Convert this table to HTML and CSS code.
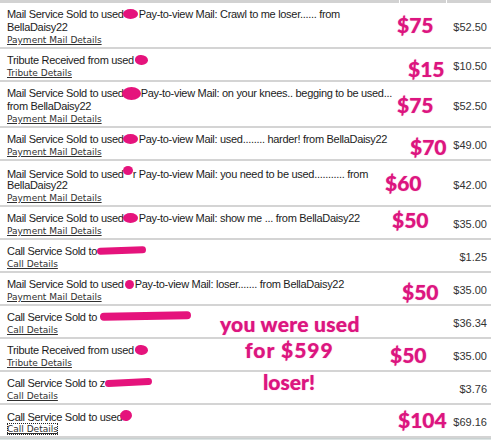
FILE: index.html
```html
<!DOCTYPE html>
<html>
<head>
<meta charset="utf-8">
<link rel="stylesheet" href="styles.css">
</head>
<body>
<div class="page">
  <div class="head"><div class="hc hc-desc"></div><div class="hc hc-mid"></div><div class="hc hc-amt"></div></div>

  <div class="row">
    <div class="desc">
      <div class="line">Mail Service Sold to used<span class="blob b1"></span>Pay-to-view Mail: Crawl to me loser...... from</div>
      <div class="line">BellaDaisy22</div>
      <a class="det">Payment Mail Details</a>
    </div>
    <div class="amt">$52.50</div>
  </div>

  <div class="row">
    <div class="desc">
      <div class="line">Tribute Received from used<span class="blob b2"></span></div>
      <a class="det">Tribute Details</a>
    </div>
    <div class="amt">$10.50</div>
  </div>

  <div class="row">
    <div class="desc">
      <div class="line">Mail Service Sold to used<span class="blob b3"></span>Pay-to-view Mail: on your knees.. begging to be used...</div>
      <div class="line">from BellaDaisy22</div>
      <a class="det">Payment Mail Details</a>
    </div>
    <div class="amt">$52.50</div>
  </div>

  <div class="row">
    <div class="desc">
      <div class="line">Mail Service Sold to used<span class="blob b1"></span>Pay-to-view Mail: used........ harder! from BellaDaisy22</div>
      <a class="det">Payment Mail Details</a>
    </div>
    <div class="amt">$49.00</div>
  </div>

  <div class="row">
    <div class="desc">
      <div class="line">Mail Service Sold to used<span class="blob b4"></span>r Pay-to-view Mail: you need to be used........... from</div>
      <div class="line">BellaDaisy22</div>
      <a class="det">Payment Mail Details</a>
    </div>
    <div class="amt">$42.00</div>
  </div>

  <div class="row">
    <div class="desc">
      <div class="line">Mail Service Sold to used<span class="blob b1"></span>Pay-to-view Mail: show me ... from BellaDaisy22</div>
      <a class="det">Payment Mail Details</a>
    </div>
    <div class="amt">$35.00</div>
  </div>

  <div class="row">
    <div class="desc">
      <div class="line">Call Service Sold to<span class="scr s1"></span></div>
      <a class="det">Call Details</a>
    </div>
    <div class="amt">$1.25</div>
  </div>

  <div class="row">
    <div class="desc">
      <div class="line">Mail Service Sold to used<span class="blob b5"></span>Pay-to-view Mail: loser....... from BellaDaisy22</div>
      <a class="det">Payment Mail Details</a>
    </div>
    <div class="amt">$35.00</div>
  </div>

  <div class="row">
    <div class="desc">
      <div class="line">Call Service Sold to <span class="scr s2"></span></div>
      <a class="det">Call Details</a>
    </div>
    <div class="amt">$36.34</div>
  </div>

  <div class="row">
    <div class="desc">
      <div class="line">Tribute Received from used<span class="blob b2"></span></div>
      <a class="det">Tribute Details</a>
    </div>
    <div class="amt">$35.00</div>
  </div>

  <div class="row">
    <div class="desc">
      <div class="line">Call Service Sold to z<span class="scr s3"></span></div>
      <a class="det">Call Details</a>
    </div>
    <div class="amt">$3.76</div>
  </div>

  <div class="row">
    <div class="desc">
      <div class="line">Call Service Sold to used<span class="blob b6"></span></div>
      <a class="det focus">Call Details</a>
    </div>
    <div class="amt">$69.16</div>
  </div>

  <div class="foot"></div>

  <div class="ink n1">$75</div>
  <div class="ink n2">$15</div>
  <div class="ink n3">$75</div>
  <div class="ink n4">$70</div>
  <div class="ink n5">$60</div>
  <div class="ink n6">$50</div>
  <div class="ink n7">$50</div>
  <div class="ink n8">you were used</div>
  <div class="ink n9">for $599</div>
  <div class="ink n10">$50</div>
  <div class="ink n11">loser!</div>
  <div class="ink n12">$104</div>
</div>
</body>
</html>
```

FILE: styles.css
```css
html, body {
  margin: 0;
  padding: 0;
  background: #ffffff;
}
body {
  font-family: "Liberation Sans", Arial, sans-serif;
  color: #1c1c1c;
}
.page {
  position: relative;
  width: 491px;
  height: 440px;
  overflow: hidden;
}
.head {
  display: flex;
  height: 3px;
  background: #d2d2d2;
}
.hc { height: 3px; }
.hc-desc { width: 399px; }
.hc-mid { width: 46px; border-left: 1px solid #fff; }
.hc-amt { flex: 1; border-left: 1px solid #fff; }

.row {
  display: flex;
  align-items: center;
  padding: 5px 0 1px 0;
  border-bottom: 2px solid #d4d4d4;
}
.desc {
  flex: 1;
  padding-left: 7px;
  min-width: 0;
  font-size: 11px;
}
.line {
  font-size: 11px;
  letter-spacing: -0.3px;
  line-height: 13px;
  height: 13px;
  white-space: nowrap;
}
.det {
  display: block;
  width: fit-content;
  height: 12px;
  font-family: "DejaVu Sans", Verdana, sans-serif;
  font-size: 9px;
  line-height: 12px;
  color: #303030;
  text-decoration: underline;
}
.focus {
  outline: 1px dotted #222;
  outline-offset: -1px;
}
.amt {
  width: 60px;
  padding-right: 4px;
  text-align: right;
  font-size: 11px;
  line-height: 13px;
  color: #333;
}

.blob {
  display: inline-block;
  background: #e5137c;
  border-radius: 50%;
  vertical-align: -1px;
}
.b1 { width: 15px; height: 10px; margin: 0 1px 0 -1px; }
.b2 { width: 13px; height: 10px; margin-left: 1px; border-radius: 45% 55% 50% 50%; }
.b3 { width: 19px; height: 13px; margin: 0 0 0 -2px; vertical-align: -3px; }
.b4 { width: 10px; height: 9px; margin-left: -1px; vertical-align: 3px; }
.b5 { width: 9px; height: 9px; margin: 0 1px; }
.b6 { width: 12px; height: 11px; margin-left: -2px; vertical-align: 0; transform: rotate(-20deg); }

.scr {
  display: inline-block;
  background: #e5137c;
  border-radius: 5px;
  height: 7px;
  vertical-align: 1px;
}
.s1 { width: 49px; transform: rotate(-2deg); }
.s2 { width: 91px; height: 8px; transform: rotate(-1deg); }
.s3 { width: 47px; transform: rotate(-3deg); }

.foot {
  height: 6px;
  background: #dde4e4;
  border-top: 1px solid #c9d1d1;
}

.ink {
  position: absolute;
  font-family: Lato, "Open Sans", sans-serif;
  font-weight: 900;
  font-size: 21px;
  line-height: 21px;
  color: #dc1580;
  white-space: nowrap;
  text-shadow: 0 0 1px #f07ab5;
}
.n1 { left: 397px; top: 14px; }
.n2 { left: 408px; top: 58px; }
.n3 { left: 397px; top: 94px; }
.n4 { left: 410px; top: 136px; }
.n5 { left: 385px; top: 172px; }
.n6 { left: 392px; top: 209px; }
.n7 { left: 402px; top: 281px; }
.n8 { left: 220px; top: 313px; letter-spacing: 0.3px; }
.n9 { left: 245px; top: 339px; letter-spacing: 1px; }
.n10 { left: 390px; top: 344px; }
.n11 { left: 263px; top: 371px; }
.n12 { left: 398px; top: 409px; }
```
